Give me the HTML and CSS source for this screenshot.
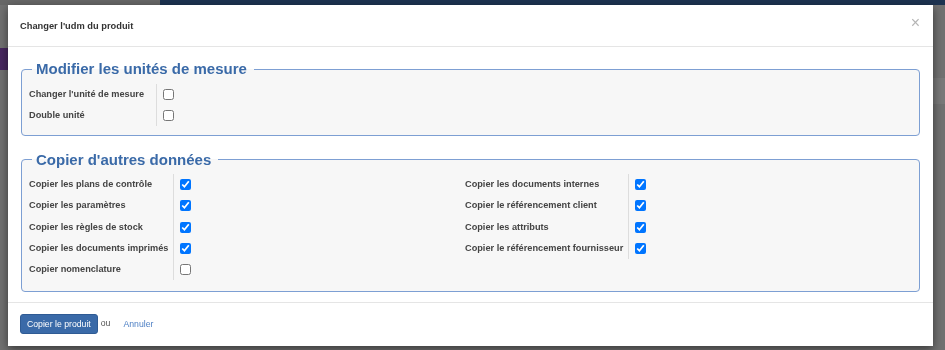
FILE: index.html
```html
<!DOCTYPE html>
<html lang="fr">
<head>
    <meta charset="UTF-8">
    <title>Changer l'udm du produit</title>
    <link rel="stylesheet" href="styles.css">
</head>
<body>
    <div class="page">
        <div class="topbar">
            <div class="topbar-left"></div>
            <div class="topbar-main"></div>
        </div>
        <div class="page-body">
            <div class="side-left">
                <span class="purple-btn"></span>
            </div>
            <div class="side-right">
                <span class="band"></span>
            </div>
        </div>
    </div>

    <div class="backdrop"></div>

    <div class="modal">
        <div class="modal-header">
            <h4>Changer l'udm du produit</h4>
            <span class="close">&times;</span>
        </div>

        <div class="modal-body">
            <fieldset class="box">
                <legend>Modifier les unités de mesure</legend>
                <div class="group narrow">
                    <label class="lbl">Changer l'unité de mesure</label>
                    <span class="val"><input type="checkbox"></span>
                    <label class="lbl">Double unité</label>
                    <span class="val"><input type="checkbox"></span>
                </div>
            </fieldset>

            <fieldset class="box">
                <legend>Copier d'autres données</legend>
                <div class="cols">
                    <div class="group">
                        <label class="lbl">Copier les plans de contrôle</label>
                        <span class="val"><input type="checkbox" checked></span>
                        <label class="lbl">Copier les paramètres</label>
                        <span class="val"><input type="checkbox" checked></span>
                        <label class="lbl">Copier les règles de stock</label>
                        <span class="val"><input type="checkbox" checked></span>
                        <label class="lbl">Copier les documents imprimés</label>
                        <span class="val"><input type="checkbox" checked></span>
                        <label class="lbl">Copier nomenclature</label>
                        <span class="val"><input type="checkbox"></span>
                    </div>
                    <div class="group">
                        <label class="lbl">Copier les documents internes</label>
                        <span class="val"><input type="checkbox" checked></span>
                        <label class="lbl">Copier le référencement client</label>
                        <span class="val"><input type="checkbox" checked></span>
                        <label class="lbl">Copier les attributs</label>
                        <span class="val"><input type="checkbox" checked></span>
                        <label class="lbl">Copier le référencement fournisseur</label>
                        <span class="val"><input type="checkbox" checked></span>
                    </div>
                </div>
            </fieldset>
        </div>

        <div class="modal-footer">
            <button class="btn-primary">Copier le produit</button>
            <span class="ou">ou</span>
            <a href="#" class="link">Annuler</a>
        </div>
    </div>
</body>
</html>
```

FILE: styles.css
```css
html, body {
    margin: 0;
    padding: 0;
    height: 100%;
}

body {
    font-family: 'Liberation Sans', Arial, sans-serif;
    background-color: #e2e2e2;
    overflow: hidden;
}

/* page behind the dialog */
.page {
    height: 100%;
}

.topbar {
    display: flex;
    height: 5px;
}

.topbar-left {
    width: 160px;
    background-color: #cfcfcf;
}

.topbar-main {
    flex: 1;
    background-color: #3b66a3;
}

.page-body {
    display: flex;
    justify-content: space-between;
    height: 345px;
}

.side-left {
    width: 8px;
    padding-top: 43px;
}

.purple-btn {
    display: block;
    height: 22px;
    background-color: #8e4fbf;
}

.side-right {
    width: 12px;
    padding-top: 73px;
}

.band {
    display: block;
    height: 26px;
    background-color: #f2f2f2;
}

.backdrop {
    position: fixed;
    inset: 0;
    background-color: rgba(0, 0, 0, 0.5);
}

/* dialog */
.modal {
    position: absolute;
    left: 8px;
    top: 5px;
    width: 925px;
    background-color: #fff;
    box-shadow: 0 3px 9px rgba(0, 0, 0, 0.5);
}

.modal-header {
    display: flex;
    align-items: center;
    justify-content: space-between;
    height: 42px;
    padding: 0 12px;
    border-bottom: 1px solid #e5e5e5;
    box-sizing: border-box;
}

.modal-header h4 {
    margin: 0;
    font-size: 9.3px;
    font-weight: bold;
    color: #333;
}

.close {
    font-size: 16px;
    color: #b5b5b5;
    margin-top: -5px;
    margin-right: 1px;
}

.modal-body {
    padding: 13px 13px 10px;
}

.box {
    margin: 0;
    padding: 5.5px 7px 8.5px;
    border: 1px solid #7d9fd3;
    border-radius: 4px;
    background-color: #f7f7f7;
}

.box + .box {
    margin-top: 15px;
    padding-bottom: 10.5px;
}

.box legend {
    margin-left: 3px;
    padding: 0 7px 0 4px;
    font-size: 15px;
    font-weight: bold;
    color: #3a6aa8;
    line-height: 18px;
}

.cols {
    display: grid;
    grid-template-columns: 436px 1fr;
}

.group {
    display: grid;
    grid-template-columns: max-content 1fr;
    grid-auto-rows: 21.25px;
    align-content: start;
}

.group.narrow {
    grid-template-columns: 128px 1fr;
}

.lbl {
    line-height: 21px;
    padding-right: 5px;
    font-size: 9.2px;
    font-weight: bold;
    color: #444;
    border-right: 1px solid #ddd;
    white-space: nowrap;
}

.val {
    display: flex;
    align-items: center;
}

.val input {
    width: 11px;
    height: 11px;
    margin: 0 0 0 6px;
}

.modal-footer {
    display: flex;
    align-items: center;
    height: 43px;
    padding: 0 12px;
    border-top: 1px solid #e5e5e5;
}

.btn-primary {
    height: 20px;
    padding: 0 6px;
    font-family: 'Liberation Sans', Arial, sans-serif;
    font-size: 8.7px;
    color: #fff;
    background-color: #3a6aa8;
    border: 1px solid #2f5b94;
    border-radius: 3px;
}

.ou {
    margin-left: 3px;
    margin-top: -2px;
    font-size: 8.7px;
    color: #555;
}

.link {
    margin-left: 13px;
    font-size: 8.7px;
    color: #4c7fc4;
    text-decoration: none;
}
```
